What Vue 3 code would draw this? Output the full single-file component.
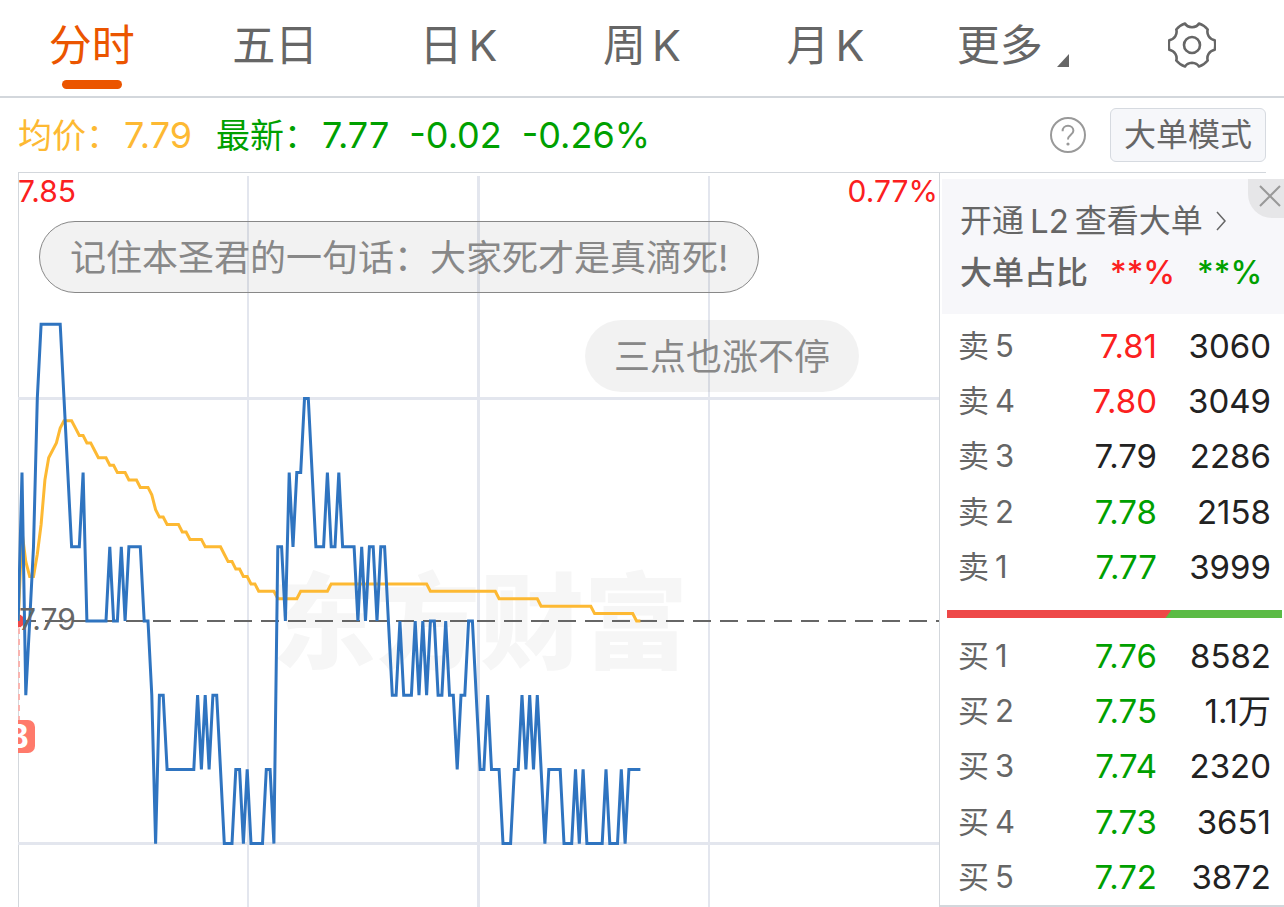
<template>
  <div class="page">
    <nav class="tabs">
      <button
        v-for="tab in tabs"
        :key="tab.id"
        type="button"
        class="tab"
        :class="{ active: tab.id === current }"
        @click="current = tab.id"
      >
        <span>{{ tab.name }}</span><span v-if="tab.unit" class="unit">{{ tab.unit }}</span>
        <svg v-if="tab.id === 'more'" class="corner" viewBox="0 0 12 13"><path d="M12 0V13H0Z" /></svg>
      </button>
      <button type="button" class="tab" aria-label="设置">
        <svg class="gear" viewBox="0 0 48 48">
          <path d="M17 2.5Q19 6 24 6.3Q29 6 31 2.5Q36 4 39.7 8.5C38.5 13 41 18 46.7 19.3Q47.8 24 46.7 28.7C41 30 38.5 35 39.7 39.5Q36 44 31 45.5Q29 42 24 41.7Q19 42 17 45.5Q12 44 8.3 39.5C9.5 35 7 30 1.3 28.7Q.2 24 1.3 19.3C7 18 9.5 13 8.3 8.5Q12 4 17 2.5Z" />
          <circle cx="24" cy="24" r="8" />
        </svg>
      </button>
    </nav>

    <header class="info">
      <p class="avg"><span>均价：</span><span class="num">7.79</span></p>
      <p class="last">
        <span>最新：</span><span class="num">7.77</span><span class="num diff">-0.02</span><span class="num diff">-0.26%</span>
      </p>
      <button type="button" class="help" aria-label="帮助">
        <svg viewBox="0 0 36 36">
          <circle cx="18" cy="18" r="17" />
          <path d="M12.6 14.2C12.6 10.8 15 8.8 18 8.8S23.4 10.8 23.4 13.8C23.4 17.6 18 18 18 22.4" />
          <circle class="dot" cx="18" cy="27" r="1.6" />
        </svg>
      </button>
      <button type="button" class="mode">大单模式</button>
    </header>

    <main class="body">
      <section class="chart">
        <svg class="plot" viewBox="18 173 921 734">
          <text class="watermark" x="480" y="661">东方财富</text>
          <g class="grid">
            <path d="M248 176V907M709 176V907" stroke-width="2" />
            <path d="M478.5 176V907M18 398.5H939M18 843.5H939" stroke-width="3" />
          </g>
          <path class="base" d="M18 621H939" />
          <path class="marker-line" d="M19 628V720" />
          <rect class="badge" x="1" y="720" width="34" height="33" rx="7" />
          <text class="badge-text" x="18" y="748">B</text>
          <circle class="marker" cx="18" cy="621" r="7" />
          <polyline class="line-avg" :points="avgPoints" />
          <polyline class="line-price" :points="pricePoints" />
          <text class="axis up" x="18" y="202">7.85</text>
          <text class="axis up end" x="938" y="202">0.77%</text>
          <text class="axis" x="19" y="630">7.79</text>
        </svg>
        <span class="bullet mine">记住本圣君的一句话：大家死才是真滴死!</span>
        <span class="bullet other">三点也涨不停</span>
      </section>

      <aside class="side">
        <div class="level2">
          <a class="open" href="#">
            <span>开通</span><span class="num2">L2</span><span>查看大单</span>
            <svg class="arrow" viewBox="0 0 10 20"><path d="M1 1L9 10L1 19" /></svg>
          </a>
          <p class="ratio"><span>大单占比</span><b class="up">**%</b><b class="down">**%</b></p>
          <button type="button" class="close" aria-label="关闭">
            <svg viewBox="0 0 22 22"><path d="M1 1L21 21M21 1L1 21" /></svg>
          </button>
        </div>
        <table class="book">
          <tbody>
            <tr v-for="row in asks" :key="row.no">
              <th scope="row"><span>卖</span><span class="no">{{ row.no }}</span></th>
              <td class="price" :class="row.trend">{{ row.price }}</td>
              <td class="amount">{{ row.amount }}</td>
            </tr>
          </tbody>
        </table>
        <div class="power">
          <div class="power-ask" :style="{ width: askShare + '%' }"></div>
        </div>
        <table class="book">
          <tbody>
            <tr v-for="row in bids" :key="row.no">
              <th scope="row"><span>买</span><span class="no">{{ row.no }}</span></th>
              <td class="price" :class="row.trend">{{ row.price }}</td>
              <td class="amount">{{ row.amount }}</td>
            </tr>
          </tbody>
        </table>
      </aside>
    </main>
  </div>
</template>

<script setup>
import { ref, computed } from 'vue'

const current = ref('time')
const askShare = 67

const tabs = [
  { id: 'time', name: '分时' },
  { id: 'five', name: '五日' },
  { id: 'day', name: '日', unit: 'K' },
  { id: 'week', name: '周', unit: 'K' },
  { id: 'month', name: '月', unit: 'K' },
  { id: 'more', name: '更多' }
]

const asks = [
  { no: 5, price: '7.81', amount: '3060', trend: 'up' },
  { no: 4, price: '7.80', amount: '3049', trend: 'up' },
  { no: 3, price: '7.79', amount: '2286', trend: '' },
  { no: 2, price: '7.78', amount: '2158', trend: 'down' },
  { no: 1, price: '7.77', amount: '3999', trend: 'down' }
]

const bids = [
  { no: 1, price: '7.76', amount: '8582', trend: 'down' },
  { no: 2, price: '7.75', amount: '1.1万', trend: 'down' },
  { no: 3, price: '7.74', amount: '2320', trend: 'down' },
  { no: 4, price: '7.73', amount: '3651', trend: 'down' },
  { no: 5, price: '7.72', amount: '3872', trend: 'down' }
]

// [ticks from 7.79, minutes], one tick is 0.01
const priceRuns = [
  [0, 1], [2, 1], [-1, 1], [0, 1], [1, 1], [3, 1], [4, 6], [3, 1], [2, 1], [1, 3], [2, 1],
  [0, 6], [1, 1], [0, 2], [1, 1], [0, 1], [1, 4], [0, 2], [-1, 1], [-3, 1], [-1, 2],
  [-2, 8], [-1, 1], [-2, 1], [-1, 1], [-2, 1], [-1, 2], [-2, 1], [-3, 3], [-2, 2], [-3, 1],
  [-2, 1], [-3, 4], [-2, 2], [-3, 1], [1, 2], [0, 1], [2, 1], [1, 1], [2, 2], [3, 2],
  [2, 1], [1, 3], [2, 1], [1, 2], [2, 1], [1, 4], [0, 1], [1, 1], [0, 1], [1, 2],
  [0, 1], [1, 2], [0, 1], [-1, 2], [0, 1], [-1, 3], [0, 1], [-1, 1], [0, 1], [-1, 1],
  [0, 2], [-1, 2], [0, 1], [-1, 2], [-2, 1], [-1, 2], [0, 2], [-1, 1], [-2, 2], [-1, 1],
  [-2, 3], [-3, 3], [-2, 2], [-1, 1], [-2, 1], [-1, 1], [-2, 1], [-1, 1], [-2, 1], [-3, 1],
  [-2, 4], [-3, 3], [-2, 1], [-3, 1], [-2, 1], [-3, 5], [-2, 1], [-3, 3], [-2, 1], [-3, 1],
  [-2, 4]
]

// same, one tick is 0.001
const avgRuns = [
  [0, 1], [12, 1], [8, 1], [6, 2], [9, 1], [13, 1], [19, 1], [22, 1], [23, 1], [24, 1],
  [26, 1], [27, 3], [26, 1], [25, 2], [24, 2], [23, 1], [22, 3], [21, 2], [20, 3], [19, 3],
  [18, 3], [17, 1], [15, 1], [14, 2], [13, 4], [12, 2], [11, 4], [10, 5], [9, 1], [8, 2],
  [7, 2], [6, 2], [5, 2], [4, 5], [3, 6], [4, 8], [5, 26], [4, 18], [3, 11], [2, 14],
  [1, 11], [0, 2]
]

function toPoints(runs, tick) {
  const values = runs.flatMap(([value, count]) => Array(count).fill(value))
  return values
    .map((value, i) => `${(18.2 + i * 3.817).toFixed(1)},${(621 - value * tick).toFixed(1)}`)
    .join(' ')
}

const pricePoints = computed(() => toPoints(priceRuns, 74.2))
const avgPoints = computed(() => toPoints(avgRuns, 7.42))
</script>

<style>
body {
  margin: 0;
  background: #fff;
}
</style>

<style scoped>
.page {
  font-family: Inter, "Noto Sans CJK SC", sans-serif;
  color: #666;
  overflow: hidden;
}

button {
  padding: 0;
  border: 0;
  background: none;
  color: inherit;
  font: inherit;
  cursor: pointer;
}

p {
  margin: 0;
}

svg {
  display: block;
}

.tabs {
  display: flex;
  height: 96px;
  border-bottom: 2px solid #d3d7dc;
}

.tab {
  position: relative;
  flex: 1;
  display: flex;
  align-items: center;
  justify-content: center;
  padding-bottom: 6px;
  font-size: 43px;
  line-height: 60px;
}

.tab.active {
  color: #eb5500;
}

.tab.active::after {
  content: "";
  position: absolute;
  left: 50%;
  bottom: 7px;
  width: 60px;
  height: 9px;
  margin-left: -30px;
  border-radius: 5px;
  background: #eb5500;
}

.unit {
  margin-left: 6px;
}

.corner {
  width: 12px;
  height: 13px;
  margin: 30px -8px 0 14px;
  fill: #666;
}

.gear {
  width: 48px;
  height: 48px;
  fill: none;
  stroke: #666;
  stroke-width: 2.6;
  stroke-linejoin: round;
}

.info {
  display: flex;
  align-items: center;
  height: 74px;
  margin: 0 18px;
  border-bottom: 1px solid #d3d7dc;
  font-size: 34px;
}

.info p {
  display: flex;
  align-items: baseline;
  line-height: 50px;
}

.info .num {
  margin-left: 4px;
  font-size: 36px;
}

.info .diff {
  margin-left: 20px;
}

.avg {
  color: #fdb933;
}

.last {
  margin-left: 24px;
  color: #00a000;
}

.help {
  margin-left: auto;
}

.help svg {
  width: 36px;
  height: 36px;
  fill: none;
  stroke: #999;
  stroke-width: 2;
}

.help .dot {
  fill: #999;
  stroke: none;
}

.mode {
  height: 54px;
  margin-left: 24px;
  padding: 0 13px;
  border: 1px solid #d6dae0;
  border-radius: 6px;
  background: #f6f7fa;
  font-size: 32px;
  line-height: 50px;
}

.body {
  display: flex;
  align-items: flex-start;
}

.chart {
  position: relative;
  flex: 1;
  margin-left: 18px;
}

.plot {
  width: 100%;
  height: auto;
  box-shadow: 1px 0 #d3d7dc inset;
}

.grid {
  fill: none;
  stroke: #e3e6ee;
}

.watermark {
  font-size: 104px;
  font-weight: 900;
  text-anchor: middle;
  fill: #f6f6f6;
}

.base {
  stroke: #666;
  stroke-width: 2;
  stroke-dasharray: 18 9;
}

.marker {
  fill: #f04848;
  stroke: #fff;
  stroke-width: 1;
}

.marker-line {
  stroke: #f9b4b0;
  stroke-width: 2;
  stroke-dasharray: 6 5;
}

.badge {
  fill: #ff7a6b;
}

.badge-text {
  font-size: 32px;
  font-weight: 700;
  text-anchor: middle;
  fill: #fff;
}

.line-avg,
.line-price {
  fill: none;
  stroke-width: 3;
}

.line-avg {
  stroke: #fdb933;
}

.line-price {
  stroke: #2f74c0;
}

.axis {
  font-size: 30px;
  fill: #666;
}

.axis.up {
  fill: #fb2020;
}

.axis.end {
  text-anchor: end;
}

.bullet {
  position: absolute;
  box-sizing: border-box;
  height: 72px;
  border-radius: 36px;
  background: rgba(0, 0, 0, 0.05);
  color: #888;
  font-size: 36px;
  white-space: nowrap;
}

.bullet.mine {
  top: 48px;
  left: 21px;
  padding: 0 30px;
  border: 1px solid #888;
  line-height: 72px;
}

.bullet.other {
  top: 147px;
  right: 80px;
  padding: 0 29px;
  line-height: 74px;
}

.side {
  box-sizing: border-box;
  width: 345px;
  padding-top: 6px;
  border-left: 1px solid #d3d7dc;
  border-bottom: 2px solid #d3d7dc;
}

.level2 {
  position: relative;
  box-sizing: border-box;
  height: 135px;
  margin: 0 0 4px 2px;
  padding: 16px 0 0 18px;
  background: #f7f7fa;
  font-size: 32px;
  line-height: 52px;
}

.open {
  display: flex;
  align-items: center;
  color: inherit;
  text-decoration: none;
}

.num2 {
  margin: 0 6px;
  font-size: 33px;
}

.arrow {
  width: 10px;
  height: 20px;
  margin-left: 13px;
  fill: none;
  stroke: #666;
  stroke-width: 1.5;
}

.ratio {
  display: flex;
  font-weight: 500;
}

.ratio b {
  margin-left: 22px;
  font-weight: 500;
}

.close {
  position: absolute;
  top: 0;
  right: 0;
  width: 36px;
  height: 39px;
  padding-left: 11px;
  border-bottom-left-radius: 24px;
  background: #e6e6e8;
}

.close svg {
  width: 22px;
  height: 22px;
  margin-top: -6px;
  stroke: #999;
  stroke-width: 2;
}

.book {
  width: 100%;
  height: 277px;
  border-collapse: collapse;
  font-size: 33px;
  line-height: 40px;
}

.book th {
  padding: 0 0 0 18px;
  font-size: 31px;
  font-weight: 400;
  text-align: left;
}

.book td {
  padding: 0;
  color: #222;
  text-align: right;
}

.book .amount {
  width: 114px;
  padding-right: 13px;
}

.no {
  margin-left: 6px;
}

.up,
.book .up {
  color: #fb2020;
}

.down,
.book .down {
  color: #00a000;
}

.power {
  height: 8px;
  margin: 15px 2px 10px 7px;
  background: #5bbb45;
}

.power-ask {
  height: 8px;
  background: #ee4848;
  clip-path: polygon(0 0, 100% 0, calc(100% - 6px) 100%, 0 100%);
}
</style>
